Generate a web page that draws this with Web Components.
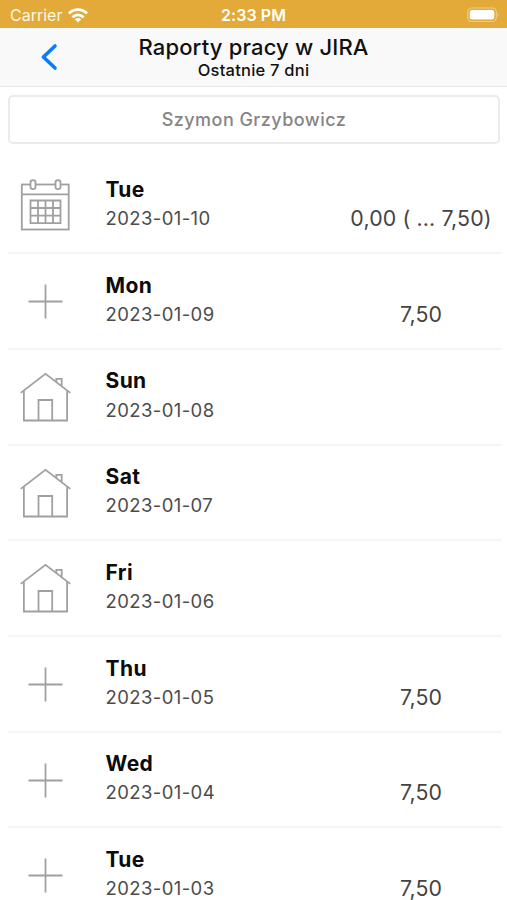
<!DOCTYPE html>
<html lang="pl">
<head>
<meta charset="utf-8">
<title>Raporty pracy w JIRA</title>
<style>
body { margin: 0; background: #fff; font-family: Inter, "Liberation Sans", sans-serif; }
</style>
</head>
<body>
<report-screen></report-screen>
<script>
function define(name, html, setup) {
  customElements.define(name, class extends HTMLElement {
    connectedCallback() {
      if (this.shadowRoot) return;
      const t = document.createElement('template');
      t.innerHTML = html;
      this.attachShadow({ mode: 'open' }).append(t.content.cloneNode(true));
      if (setup) setup(this, this.shadowRoot);
    }
  });
}

const icons = {
  calendar: `<rect x="2.8" y="14.5" width="46.9" height="45"/><path d="M2.8 24.3H49.7"/>
    <g fill="#fff"><rect x="11.5" y="10.2" width="5" height="9" rx="2.4"/><rect x="36.5" y="10.2" width="5" height="9" rx="2.4"/></g>
    <path d="M11.5 30.5H41.5V53.2H11.5ZM19 30.5V53.2M26.5 30.5V53.2M34 30.5V53.2M11.5 38H41.5M11.5 45.6H41.5"/>`,
  plus: '<path d="M26.5 18.6V52.4M9.5 35.5H43.5"/>',
  home: `<path d="M1.7 30.9L26.5 11.8L51.3 30.9M4.9 28.9V58.5H48.1V28.9M19.5 58.5V38H33.2V58.5M37.3 19.7V16.9H42.7V23.9"/>`
};

define('line-icon', `<style>
  :host { display: block; width: 52px; height: 72px; }
  svg { display: block; fill: none; stroke: #a0a0a0; stroke-width: 1.8; }
</style><svg width="52" height="72" viewBox="0 0 52 72"></svg>`,
(el, root) => { root.querySelector('svg').innerHTML = icons[el.getAttribute('name')]; });

define('status-bar', `<style>
  :host { display: grid; grid-template-columns: 1fr auto 1fr; align-items: center; height: 28px;
    box-sizing: border-box; padding: 2px 10px 0 10px; background: #e3a939; color: #fff; font-size: 16px; }
  .left { display: flex; align-items: center; gap: 6px; letter-spacing: 0; color: #fff7e6; }
  .time { font-weight: 600; letter-spacing: .1px; }
  .right { justify-self: end; margin-right: -2px; }
  svg { display: block; }
</style>
<div class="left"><span>Carrier</span>
<svg width="20" height="15" viewBox="0 0 20 15"><g fill="none" stroke="#fff" stroke-width="2.8"><path d="M.9 5.5C6.1 .3 13.9 .3 19.1 5.5"/><path d="M4.4 9.3C7.6 6 12.4 6 15.6 9.3"/></g><path fill="#fff" d="M10 14.5L6.8 11.3C8.6 9.5 11.4 9.5 13.2 11.3Z"/></svg></div>
<div class="time">2:33 PM</div>
<svg class="right" width="32" height="16" viewBox="0 0 32 16"><rect x=".7" y="1" width="28.6" height="13.5" rx="4" fill="none" stroke="#efcb88" stroke-width="1.2"/><rect x="2.7" y="3" width="24.6" height="9.6" rx="2.4" fill="#fff"/><path d="M30.6 5.5Q32.6 7.7 30.6 10Z" fill="#efcb88"/></svg>`);

define('nav-header', `<style>
  :host { display: grid; grid-template-columns: 98px 1fr 98px; height: 59px; box-sizing: border-box;
    background: #f9f9f9; border-bottom: 1.5px solid #e7e7e7; color: #111; }
  svg { display: block; margin: 15px 0 0 39.5px; }
  .titles { text-align: center; white-space: nowrap; }
  .title { font-size: 22px; font-weight: 500; line-height: 26px; padding-top: 6px; letter-spacing: .17px; }
  .sub { font-size: 16.5px; font-weight: 500; line-height: 20px; letter-spacing: .22px; }
</style>
<svg width="20" height="28" viewBox="0 0 20 28"><path d="M15 3L3.4 14L15 25" fill="none" stroke="#097cfb" stroke-width="3.6" stroke-linecap="round" stroke-linejoin="round"/></svg>
<div class="titles"><div class="title"><slot></slot></div><div class="sub"><slot name="subtitle"></slot></div></div>`);

define('user-picker', `<style>
  :host { display: flex; align-items: center; justify-content: center; height: 48.5px; margin: 8px 7px 0 8px;
    box-sizing: border-box; border: 2px solid #ebebeb; border-radius: 5px; color: #858585;
    font-size: 18px; font-weight: 500; letter-spacing: .47px; }
</style><slot></slot>`);

define('day-row', `<style>
  :host { display: grid; grid-template-columns: 97.5px 1fr auto; height: 95.72px; margin: 0 6px 0 8px;
    box-sizing: border-box; border-bottom: 2px solid #f5f5f5; white-space: nowrap; }
  line-icon { margin: 12px 0 0 11px; }
  .day { font-size: 21px; font-weight: 650; color: #0c0c0c; line-height: 26px; padding-top: 18.6px; letter-spacing: .4px; }
  .date { font-size: 18.5px; color: #4c4c4c; line-height: 24px; padding-top: 3.2px; letter-spacing: .4px; }
  .hours { width: 160px; text-align: center; font-size: 21.3px; color: #444; line-height: 24px; padding-top: 47.7px; letter-spacing: .15px; }
</style>
<line-icon></line-icon><div><div class="day"></div><div class="date"></div></div><div class="hours"><slot></slot></div>`,
(el, root) => {
  const icon = document.createElement('line-icon');
  icon.setAttribute('name', el.getAttribute('icon'));
  root.querySelector('line-icon').replaceWith(icon);
  root.querySelector('.day').textContent = el.getAttribute('day');
  root.querySelector('.date').textContent = el.getAttribute('date');
});

define('report-screen', `<style>
  :host { display: block; width: 507px; height: 900px; overflow: hidden; background: #fff; }
  .days { padding-top: 14.9px; }
</style>
<status-bar></status-bar>
<nav-header>Raporty pracy w JIRA<span slot="subtitle">Ostatnie 7 dni</span></nav-header>
<user-picker>Szymon Grzybowicz</user-picker>
<div class="days">
<day-row icon="calendar" day="Tue" date="2023-01-10">0,00 ( ... 7,50)</day-row>
<day-row icon="plus" day="Mon" date="2023-01-09">7,50</day-row>
<day-row icon="home" day="Sun" date="2023-01-08"></day-row>
<day-row icon="home" day="Sat" date="2023-01-07"></day-row>
<day-row icon="home" day="Fri" date="2023-01-06"></day-row>
<day-row icon="plus" day="Thu" date="2023-01-05">7,50</day-row>
<day-row icon="plus" day="Wed" date="2023-01-04">7,50</day-row>
<day-row icon="plus" day="Tue" date="2023-01-03">7,50</day-row>
</div>`);
</script>
</body>
</html>
